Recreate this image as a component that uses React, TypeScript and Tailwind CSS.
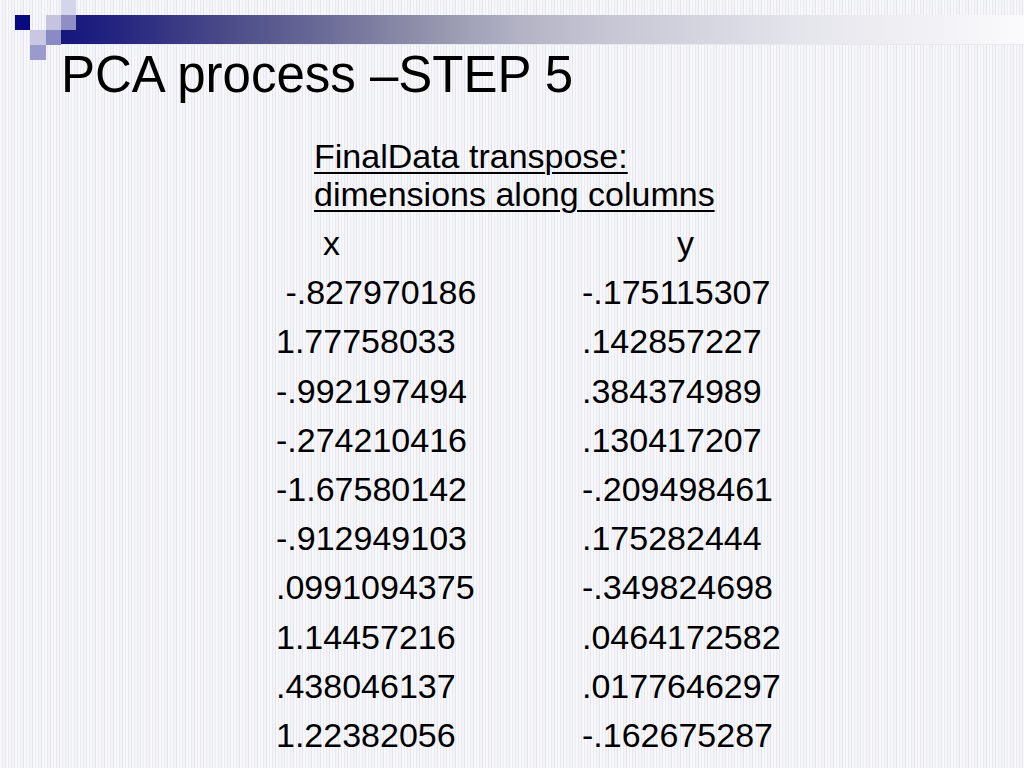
import React from "react";

const rows: [string, string][] = [
  [" -.827970186", "-.175115307"],
  ["1.77758033", ".142857227"],
  ["-.992197494", ".384374989"],
  ["-.274210416", ".130417207"],
  ["-1.67580142", "-.209498461"],
  ["-.912949103", ".175282444"],
  [".0991094375", "-.349824698"],
  ["1.14457216", ".0464172582"],
  [".438046137", ".0177646297"],
  ["1.22382056", "-.162675287"],
];

// squares + gradient bar in the top-left corner of the slide
const Corner = () => {
  return (
    <div className="grid grid-cols-[15px_15px_16px_15px_15px_1fr] grid-rows-[15px_15px_15px_15px]">
      <div className="col-start-5 row-start-1 bg-[#d4d4ea]" />
      <div className="col-start-2 row-start-2 bg-[#0a0a80]" />
      <div className="col-start-4 row-start-2 bg-[#c4c4de]" />
      <div className="col-start-5 col-end-7 row-start-2 row-end-4 bg-[linear-gradient(90deg,#16167c_0%,#222280_5%,#4a4a88_17%,#6a6a98_27%,#9292ac_38%,#b4b4c6_48%,#c8c8d6_58%,#e5e5ec_77%,#fbfbfd_100%)] border-b border-[#e8e8f0]" />
      <div className="col-start-5 row-start-2 bg-[#8f8fc6]" />
      <div className="col-start-3 row-start-3 bg-[#c8c8e2]" />
      <div className="col-start-4 row-start-3 bg-[#8a8ac4]" />
      <div className="col-start-3 row-start-4 bg-[#9a9acc]" />
    </div>
  );
};

export default function App() {
  return (
    <div className="w-[1024px] h-[768px] overflow-hidden text-black font-['Liberation_Sans',Arial,sans-serif] bg-[#f6f6fa] bg-[repeating-linear-gradient(90deg,#f8f8fc_0px,#f8f8fc_2px,#e9e9f1_2px,#e9e9f1_3px,#f4f4f9_3px,#f4f4f9_5px,#e4e4ed_5px,#e4e4ed_6px,#f9f9fc_6px,#f9f9fc_8px,#ebebf2_8px,#ebebf2_9px)]">
      <Corner />
      <h1 className="-mt-[11px] pl-[61px] text-[51px] leading-[51px] font-normal whitespace-pre">
        PCA process –STEP 5
      </h1>

      <div className="pl-[276px] pt-[37px]">
        <div className="ml-[38px] text-[34px] leading-[38px] underline decoration-[2px] underline-offset-[4px]">
          <p>FinalData transpose:</p>
          <p>dimensions along columns</p>
        </div>

        <div className="mt-[6px] text-[34px] leading-[49.2px]">
          <div className="flex">
            <span className="w-[306px] pl-[47px]">x</span>
            <span className="pl-[95px]">y</span>
          </div>
          {rows.map((r, i) => (
            <div key={i} className="flex">
              <span className="w-[306px] whitespace-pre">{r[0]}</span>
              <span className="whitespace-pre">{r[1]}</span>
            </div>
          ))}
        </div>
      </div>
    </div>
  );
}
